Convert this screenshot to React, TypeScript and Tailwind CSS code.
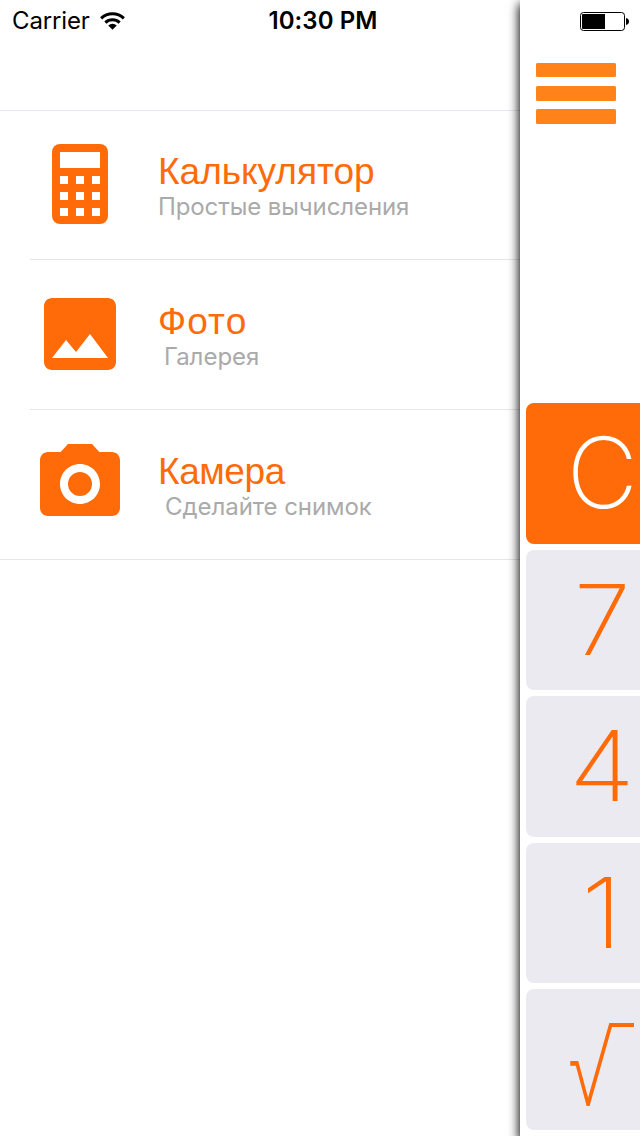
import React from 'react';

const ORANGE = '#fe6b08';

function CalculatorIcon() {
  return (
    <svg width="96" height="96" viewBox="0 0 96 96" fill={ORANGE}>
      <rect x="20" y="8" width="56" height="80" rx="8" />
      <path
        fill="#fff"
        d="M28 16h40v16H28zM28 40h8v8h-8zM44 40h8v8h-8zM60 40h8v8h-8zM28 56h8v8h-8zM44 56h8v8h-8zM60 56h8v8h-8zM28 72h8v8h-8zM44 72h8v8h-8zM60 72h8v8h-8z"
      />
    </svg>
  );
}

function PhotoIcon() {
  return (
    <svg width="96" height="96" viewBox="0 0 24 24" fill={ORANGE}>
      <path d="M21 19V5c0-1.100-.9-2-2-2H5c-1.100 0-2 .9-2 2v14c0 1.100.9 2 2 2h14c1.100 0 2-.9 2-2zM8.500 13.500l2.500 3.010L14.500 12l4.500 6H5l3.500-4.500z" />
    </svg>
  );
}

function CameraIcon() {
  return (
    <svg width="96" height="96" viewBox="0 0 24 24" fill={ORANGE}>
      <circle cx="12" cy="12" r="3" />
      <path d="M9 2L7.170 4H4c-1.100 0-2 .9-2 2v12c0 1.100.9 2 2 2h16c1.100 0 2-.9 2-2V6c0-1.100-.9-2-2-2h-3.170L15 2H9zm3 15c-2.760 0-5-2.240-5-5s2.240-5 5-5 5 2.240 5 5-2.240 5-5 5z" />
    </svg>
  );
}

function StatusBar() {
  return (
    <header className="absolute inset-x-0 top-0 z-20 grid h-10 grid-cols-3 items-center pl-3 pr-[11px] font-[Inter,sans-serif] text-black">
      <div className="flex items-center">
        <span className="w-[88px] whitespace-nowrap pt-px text-[24px] leading-10 tracking-[-0.150px]">Carrier</span>
        <svg width="25" height="18" viewBox="0 0 26 18" fill="none" stroke="#000" strokeWidth="3.200">
          <path d="M1.200 6.200a17 17 0 0 1 23.600 0" />
          <path d="M5.600 10.600a10.800 10.800 0 0 1 14.800 0" />
          <path d="M13 18l-4.400-4.400a6.300 6.300 0 0 1 8.800 0z" fill="#000" stroke="none" />
        </svg>
      </div>
      <span className="whitespace-nowrap pl-[5px] pt-px text-center text-[24px] font-semibold leading-10 tracking-[0.100px]">10:30 PM</span>
      <svg className="justify-self-end" width="49" height="20" viewBox="0 0 49 20">
        <rect x="0.500" y="1.500" width="44" height="18" rx="3" fill="none" stroke="#000" />
        <path d="M3 3h22v15H3a1 1 0 0 1-1-1V4a1 1 0 0 1 1-1z" />
        <path d="M46 7c4 .5 4 6.500 0 7z" />
      </svg>
    </header>
  );
}

type RowProps = {
  icon: React.ReactNode;
  title: string;
  subtitle: string;
  titleClass: string;
  subtitleClass: string;
};

function MenuRow({ icon, title, subtitle, titleClass, subtitleClass }: RowProps) {
  return (
    <li className="group flex h-[150px] flex-col">
      <div className="flex h-[149px] items-start pl-8 pt-[26px]">
        {icon}
        <div className="ml-[30px] flex flex-col whitespace-nowrap pt-4">
          <span className={`h-[39px] font-['Liberation_Sans',sans-serif] text-[37px] leading-10 text-[#fe6b08] ${titleClass}`}>{title}</span>
          <span className={`h-8 font-[Inter,sans-serif] text-[24px] leading-8 text-[#aaaaaa] ${subtitleClass}`}>{subtitle}</span>
        </div>
      </div>
      <div className="ml-[30px] h-px bg-[#e6e6e6] group-last:ml-0" />
    </li>
  );
}

const keys = [
  { label: 'C', box: 'bg-[#fe6b08] text-white', text: '' },
  { label: '7', box: 'bg-[#ebeaf0] text-[#fe6b08]', text: 'scale-x-105' },
  { label: '4', box: 'bg-[#ebeaf0] text-[#fe6b08]', text: 'scale-x-110' },
  { label: '1', box: 'bg-[#ebeaf0] text-[#fe6b08]', text: 'scale-x-110 -translate-x-px' },
  { label: '√', box: 'bg-[#ebeaf0] text-[#fe6b08]', text: 'scale-x-[0.76] scale-y-[1.160] -translate-x-[11px] translate-y-[6px]', bar: true },
];

export default function App() {
  return (
    <div className="relative flex h-[1136px] w-[640px] overflow-hidden bg-white">
      <StatusBar />
      <nav className="w-[520px] shrink-0 pt-[110px]">
        <div className="h-px bg-[#e8e8ef]" />
        <ul className="-mt-px">
          <MenuRow icon={<CalculatorIcon />} title="Калькулятор" subtitle="Простые вычисления" titleClass="" subtitleClass="tracking-[-0.100px]" />
          <MenuRow icon={<PhotoIcon />} title="Фото" subtitle="Галерея" titleClass="tracking-[1.100px]" subtitleClass="pl-[6px]" />
          <MenuRow icon={<CameraIcon />} title="Камера" subtitle="Сделайте снимок" titleClass="tracking-[-0.400px]" subtitleClass="pl-[7px] tracking-[-0.050px]" />
        </ul>
      </nav>
      <main className="z-10 flex w-[640px] shrink-0 flex-col bg-white px-1.5 pt-[63px] shadow-[0_5px_10px_1px_#000]">
        <div className="ml-2.5 flex h-[340px] flex-col gap-[9px]">
          <div className="h-[14px] w-20 rounded-[1.500px] bg-[#ff8319]" />
          <div className="h-[15px] w-20 rounded-[1.500px] bg-[#ff8319]" />
          <div className="-mt-px h-[15px] w-20 rounded-[1.500px] bg-[#ff8319]" />
        </div>
        <div className="flex w-[152.500px] flex-col gap-1.5">
          {keys.map((k) => (
            <div key={k.label} className={`relative flex h-[140.500px] items-center justify-center rounded-lg font-[Inter,sans-serif] text-[98px] font-[160] leading-none ${k.box}`}>
              <span className={k.text}>{k.label}</span>
              {k.bar && <span className="absolute left-[85px] top-[34px] h-1 w-[23px] bg-[#fe6b08]" />}
            </div>
          ))}
        </div>
      </main>
    </div>
  );
}
